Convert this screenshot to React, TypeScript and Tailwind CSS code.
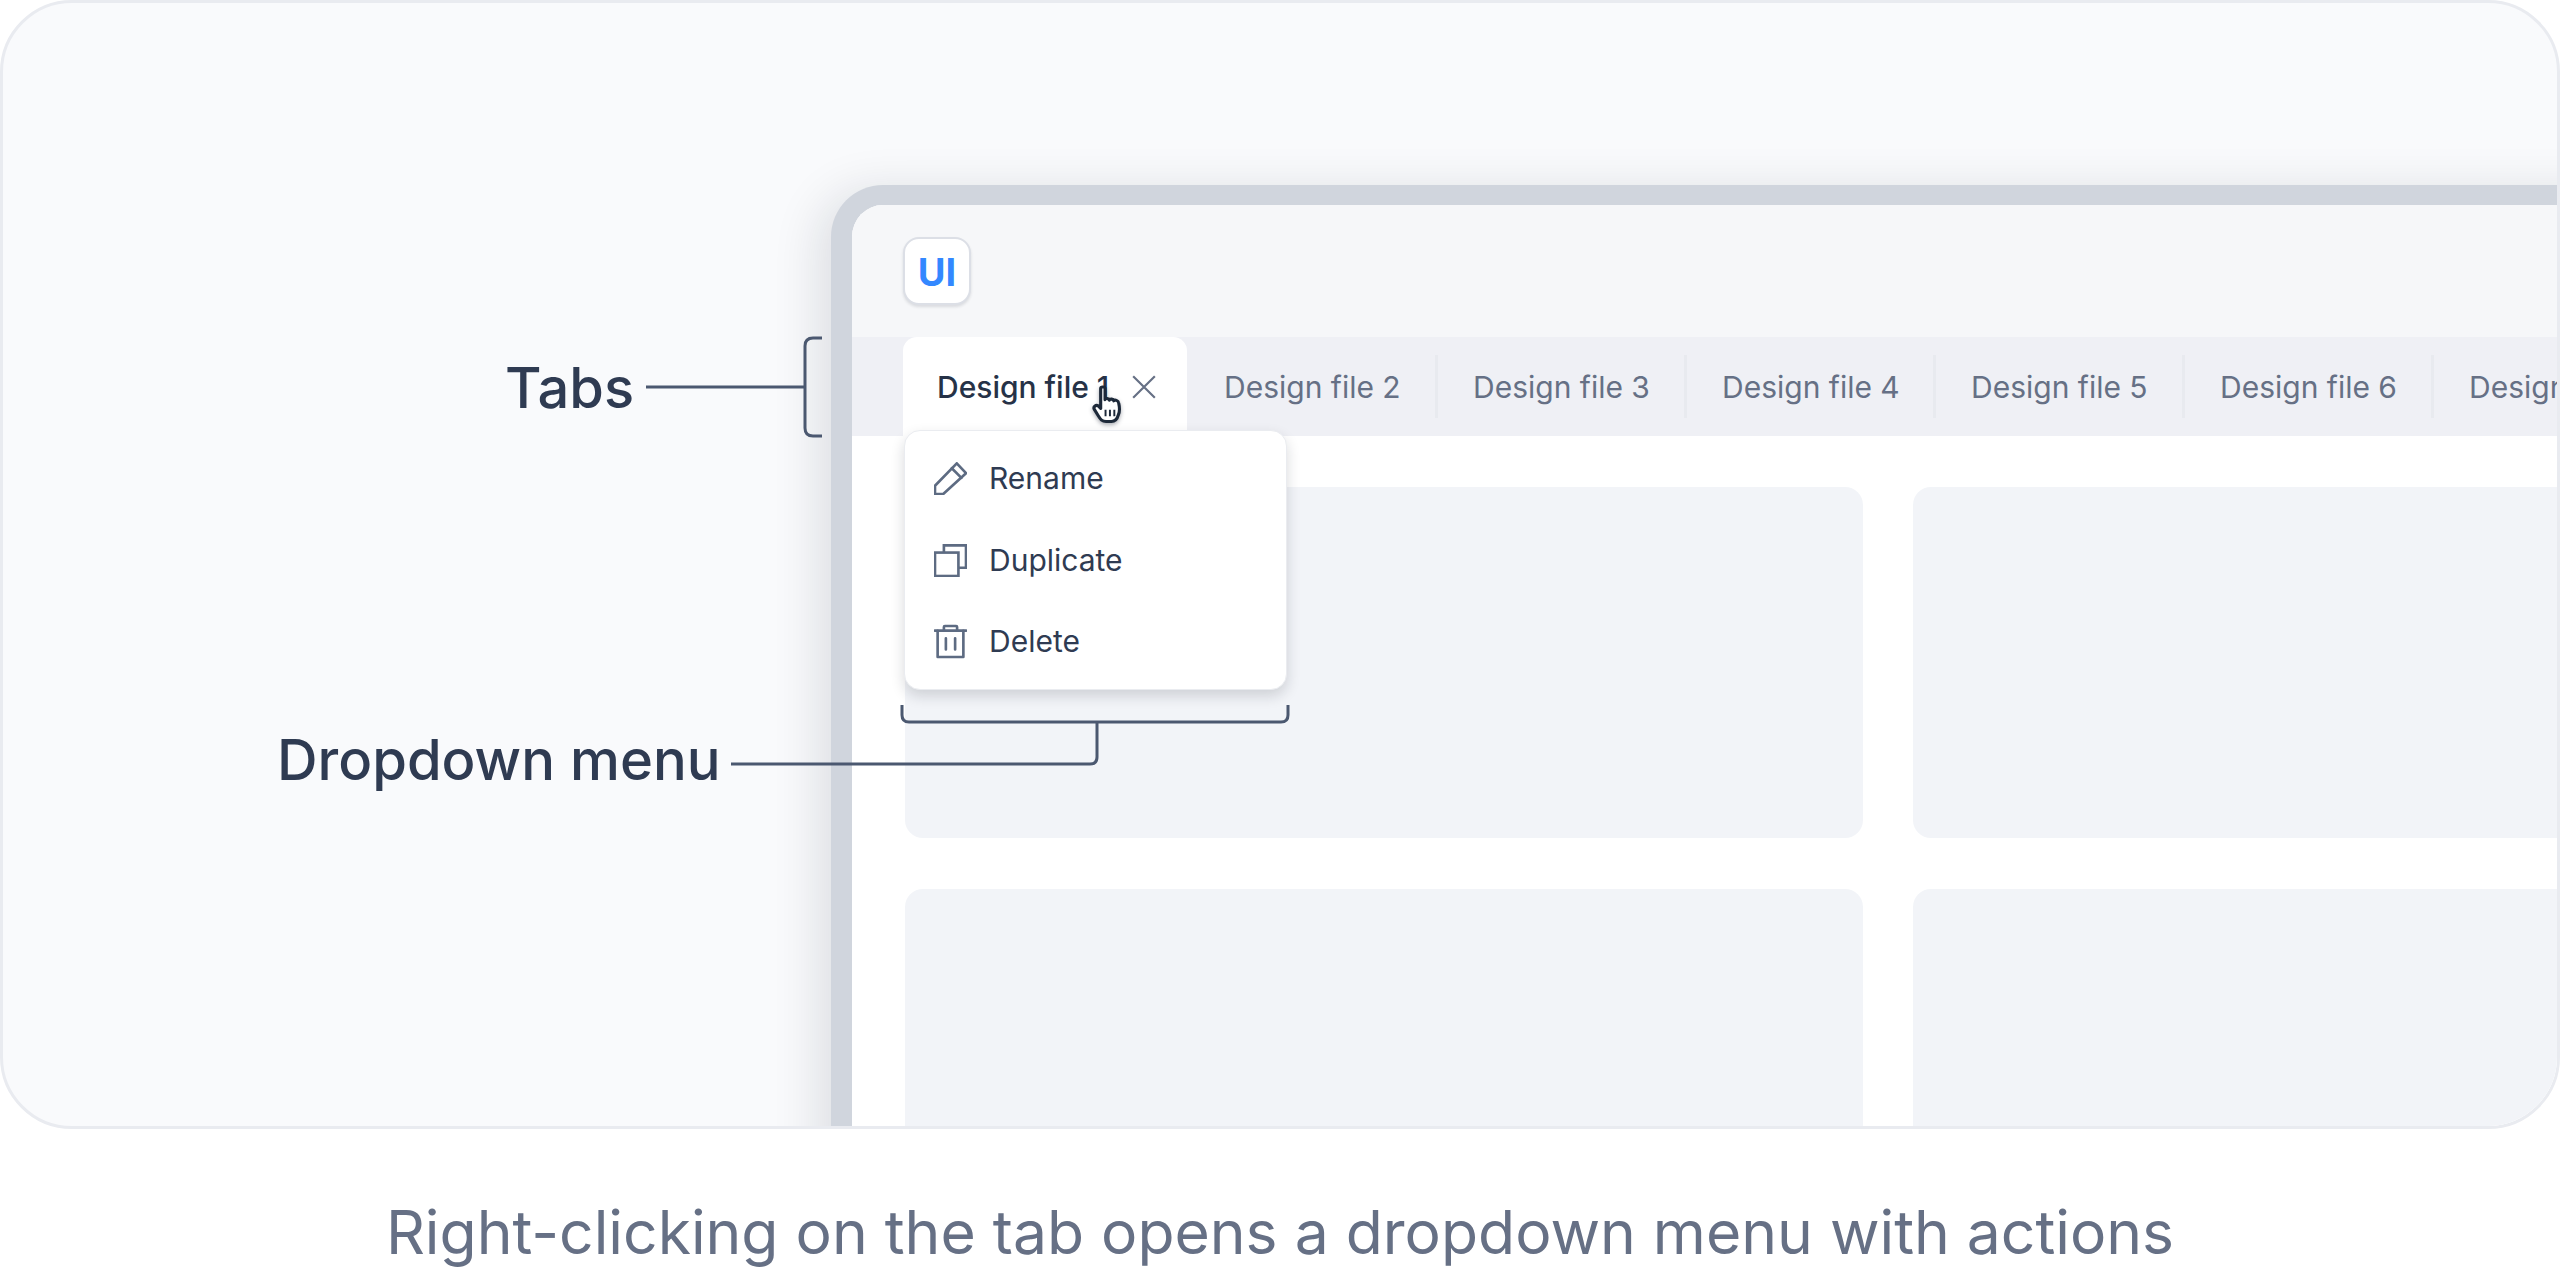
function PencilIcon() {
    return (
        <svg viewBox="0 0 100 100" className="h-[33px] w-[33px] shrink-0" fill="none" stroke="#5d6b82" strokeWidth="8" strokeLinejoin="round" strokeLinecap="round">
            <path d="M3 97V72L69 4L97 34L28 97Z" />
            <path d="M54 19L83 48" />
        </svg>
    );
}

function CopyIcon() {
    return (
        <svg viewBox="0 0 100 100" className="h-[33px] w-[33px] shrink-0" fill="none" stroke="#5d6b82" strokeWidth="8" strokeLinejoin="miter">
            <rect x="3" y="26" width="71" height="71" />
            <path d="M30 26V4H97V72H74" />
        </svg>
    );
}

function TrashIcon() {
    return (
        <svg viewBox="0 0 100 100" className="h-[35px] w-[33px] shrink-0" fill="none" stroke="#5d6b82" strokeWidth="8" strokeLinecap="round" strokeLinejoin="round">
            <path d="M2 17H98" />
            <path d="M30 16V6Q30 3 33 3H67Q70 3 70 6V16" />
            <path d="M11 18V97H89V18" />
            <path d="M36 40V74M64 40V74" />
        </svg>
    );
}

function HandCursor() {
    return (
        <svg viewBox="0 0 32 40" className="absolute left-[1091px] top-[385px] h-[39px] w-[33px] drop-shadow-[0_2px_2px_rgba(16,24,40,0.35)]">
            <path
                d="M9 3.5C9 1.5 13.5 1.5 13.5 3.5V15C14 13.5 17.5 13.5 18 15.5C18.5 14 22 14.2 22.5 16.2C23.5 15 27 15.5 27.5 18.5C28.5 23 28.5 28 27 31C26 35 23.5 37.5 20 37.5H14.5C10.5 37.5 9 35.5 6.5 31.5L2.5 25C1 22.5 4 20 6.5 21.5L9 24Z"
                fill="#fff"
                stroke="#1d2939"
                strokeWidth="3.2"
                strokeLinejoin="round"
            />
            <path d="M14 25.5V32M18.5 25.5V32M23 25.5V32" stroke="#1d2939" strokeWidth="2" fill="none" />
        </svg>
    );
}

function Connectors() {
    return (
        <svg className="absolute left-0 top-0 h-[1128px] w-[2560px]" viewBox="0 0 2560 1128" fill="none" stroke="#4b5870" strokeWidth="3">
            <path d="M646 387H805" />
            <path d="M822 338H813Q805 338 805 346V428Q805 436 813 436H822" />
            <path d="M902 705V715Q902 722 909 722H1281Q1288 722 1288 715V705" />
            <path d="M1097 722V757Q1097 764 1090 764H731" />
        </svg>
    );
}

const tabs = ['Design file 2', 'Design file 3', 'Design file 4', 'Design file 5', 'Design file 6', 'Design file 7'];
const menuItems = [
    { label: 'Rename', icon: <PencilIcon /> },
    { label: 'Duplicate', icon: <CopyIcon /> },
    { label: 'Delete', icon: <TrashIcon /> },
];

export default function App() {
    return (
        <div className="flex h-[1273px] w-[2560px] flex-col overflow-hidden bg-white [font-family:Inter,sans-serif]">
            <div className="relative h-[1129px] w-[2560px] shrink-0 overflow-hidden rounded-[72px] border-[3px] border-[#e9ebf0] bg-[#f9fafc]">
                <div className="absolute left-[-3px] top-[-3px] h-[1128px] w-[2560px]">
                    <div className="ml-[831px] mt-[185px] h-[1100px] w-[1900px] overflow-hidden rounded-tl-[52px] border-l-[21px] border-t-[20px] border-[#d0d5dd] bg-white shadow-[-12px_6px_48px_rgba(16,24,40,0.12)]">
                        <div className="flex h-[132px] items-center bg-[#f6f7f9] pl-[51px]">
                            <div className="flex h-[68px] w-[68px] items-center justify-center rounded-[16px] border-2 border-[#dcdfe6] bg-white pt-[2px] text-[38px] font-bold text-[#3388ff] shadow-[0_2px_3px_rgba(16,24,40,0.12)]">
                                UI
                            </div>
                        </div>
                        <div className="flex h-[99px] items-center bg-[#eff0f5] pl-[51px]">
                            <div className="mr-[2px] flex h-full w-[284px] shrink-0 items-center rounded-t-[14px] bg-white pl-[34px] pt-[1px] text-[30px] font-medium text-[#263247]">
                                <span className="w-[194px] shrink-0 whitespace-nowrap">Design file 1</span>
                                <svg viewBox="0 0 24 24" className="h-[26px] w-[26px]" fill="none" stroke="#667085" strokeWidth="2">
                                    <path d="M2 2L22 22M22 2L2 22" />
                                </svg>
                            </div>
                            {tabs.map(tab => (
                                <div key={tab} className="flex h-[63px] w-[249px] shrink-0 items-center whitespace-nowrap border-r-[3px] border-[#e8eaef] pl-[35px] pt-[1px] text-[30px] text-[#667085]">
                                    {tab}
                                </div>
                            ))}
                        </div>
                        <div className="grid grid-cols-[958px_958px] grid-rows-[351px_351px] gap-x-[50px] gap-y-[51px] pl-[53px] pt-[51px]">
                            <div className="rounded-[18px] bg-[#f2f4f8]" />
                            <div className="rounded-[18px] bg-[#f2f4f8]" />
                            <div className="rounded-[18px] bg-[#f2f4f8]" />
                            <div className="rounded-[18px] bg-[#f2f4f8]" />
                        </div>
                    </div>

                    <div className="absolute left-[505px] top-[353px] text-[56px] font-medium leading-[70px] text-[#2f3b52]">Tabs</div>
                    <div className="absolute left-[277px] top-[725px] whitespace-nowrap text-[56.2px] font-medium leading-[70px] text-[#2f3b52]">Dropdown menu</div>
                    <Connectors />

                    <div className="absolute left-[904px] top-[430px] h-[260px] w-[383px] rounded-[16px] border border-[#eaecf0] bg-white py-[7px] shadow-[0_6px_14px_rgba(16,24,40,0.16)]">
                        {menuItems.map(item => (
                            <div key={item.label} className="flex h-[81.5px] items-center gap-[22px] pl-[29px] text-[30px] text-[#2f3b52]">
                                {item.icon}
                                <span>{item.label}</span>
                            </div>
                        ))}
                    </div>
                    <HandCursor />
                </div>
            </div>
            <div className="flex flex-1 items-center justify-center whitespace-nowrap pt-[62px] text-[60.6px] leading-[80px] text-[#667085]">
                Right-clicking on the tab opens a dropdown menu with actions
            </div>
        </div>
    );
}
